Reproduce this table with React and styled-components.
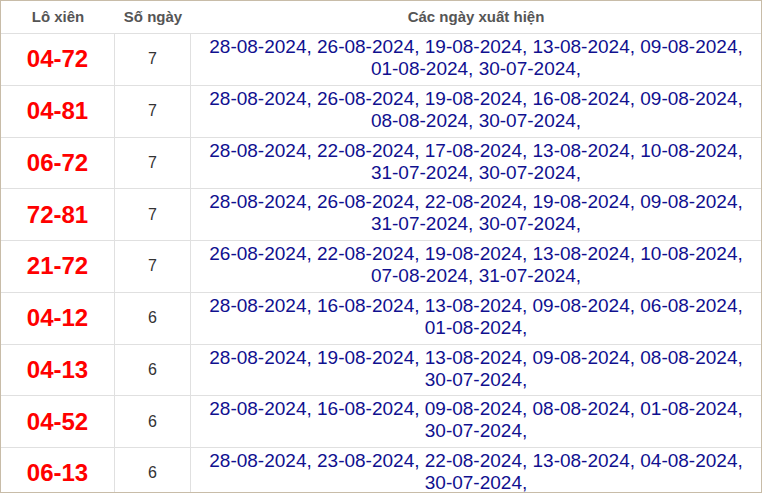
import React from "react";
import styled, { createGlobalStyle } from "styled-components";

const Global = createGlobalStyle`
  html, body { margin: 0; padding: 0; background: #fff; }
  body { font-family: "Liberation Sans", Arial, sans-serif; }
`;

const Frame = styled.div`
  box-sizing: border-box;
  width: 762px;
  height: 493px;
  border: 1px solid #c8bca8;
  overflow: hidden;
  background: #fff;
`;

const Grid = styled.div`
  display: grid;
  grid-template-columns: 114px 76px 1fr;
`;

const HeadCell = styled.div`
  box-sizing: border-box;
  height: 33px;
  border-bottom: 1px solid #e0e0e0;
  display: flex;
  align-items: center;
  justify-content: center;
  font-size: 15px;
  font-weight: bold;
  color: #555;
  padding-bottom: 1px;
`;

const Cell = styled.div`
  box-sizing: border-box;
  height: 51.75px;
  border-bottom: 1px solid #e0e0e0;
  border-right: ${(p) => (p.$last ? "none" : "1px solid #e0e0e0")};
  display: flex;
  justify-content: center;
  align-items: ${(p) => (p.$top ? "flex-start" : "center")};
  text-align: center;
`;

const Pair = styled.span`
  font-size: 24px;
  font-weight: bold;
  color: #ff0000;
`;

const Count = styled.span`
  font-size: 16px;
  color: #333;
`;

const Dates = styled.div`
  font-size: 19px;
  line-height: normal;
  color: #10108f;
  padding: 2px 6px 0;
`;

const rows = [
  ["04-72", 7, ["28-08-2024", "26-08-2024", "19-08-2024", "13-08-2024", "09-08-2024", "01-08-2024", "30-07-2024"]],
  ["04-81", 7, ["28-08-2024", "26-08-2024", "19-08-2024", "16-08-2024", "09-08-2024", "08-08-2024", "30-07-2024"]],
  ["06-72", 7, ["28-08-2024", "22-08-2024", "17-08-2024", "13-08-2024", "10-08-2024", "31-07-2024", "30-07-2024"]],
  ["72-81", 7, ["28-08-2024", "26-08-2024", "22-08-2024", "19-08-2024", "09-08-2024", "31-07-2024", "30-07-2024"]],
  ["21-72", 7, ["26-08-2024", "22-08-2024", "19-08-2024", "13-08-2024", "10-08-2024", "07-08-2024", "31-07-2024"]],
  ["04-12", 6, ["28-08-2024", "16-08-2024", "13-08-2024", "09-08-2024", "06-08-2024", "01-08-2024"]],
  ["04-13", 6, ["28-08-2024", "19-08-2024", "13-08-2024", "09-08-2024", "08-08-2024", "30-07-2024"]],
  ["04-52", 6, ["28-08-2024", "16-08-2024", "09-08-2024", "08-08-2024", "01-08-2024", "30-07-2024"]],
  ["06-13", 6, ["28-08-2024", "23-08-2024", "22-08-2024", "13-08-2024", "04-08-2024", "30-07-2024"]],
];

export default function App() {
  return (
    <>
      <Global />
      <Frame>
        <Grid>
          <HeadCell>Lô xiên</HeadCell>
          <HeadCell>Số ngày</HeadCell>
          <HeadCell>Các ngày xuất hiện</HeadCell>
          {rows.map(([pair, n, dates]) => (
            <React.Fragment key={pair}>
              <Cell>
                <Pair>{pair}</Pair>
              </Cell>
              <Cell>
                <Count>{n}</Count>
              </Cell>
              <Cell $last $top>
                <Dates>{dates.map((d) => d + ",").join(" ")}</Dates>
              </Cell>
            </React.Fragment>
          ))}
        </Grid>
      </Frame>
    </>
  );
}
